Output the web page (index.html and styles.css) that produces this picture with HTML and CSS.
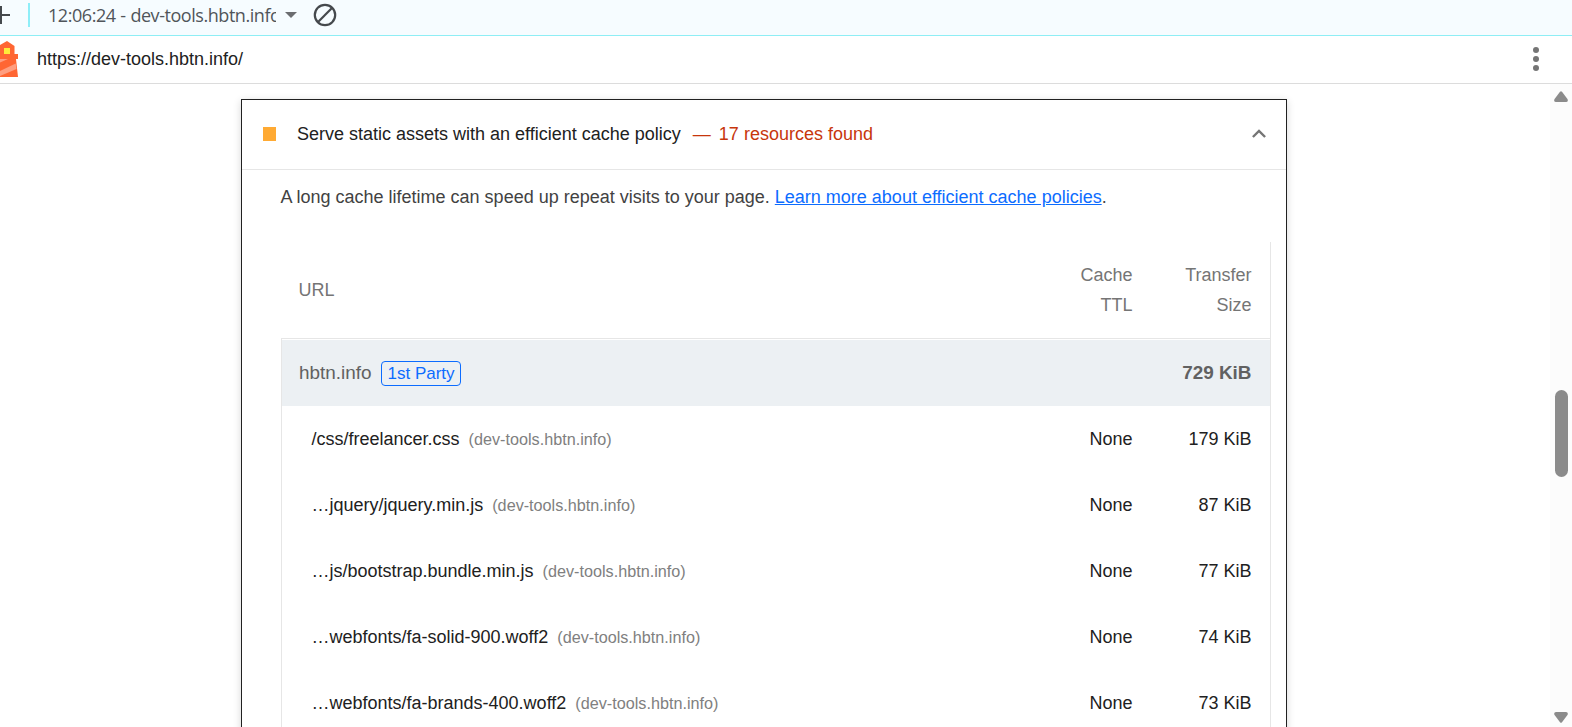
FILE: index.html
```
<!DOCTYPE html>
<html lang="en">
<head>
<meta charset="utf-8">
<title>Lighthouse</title>
<link rel="stylesheet" href="styles.css">
</head>
<body>
<header class="toolbar">
  <svg class="plus" width="10" height="35" viewBox="0 0 10 35"><path d="M1 6v18M0 15h10" fill="none" stroke="#45494d" stroke-width="2"/></svg>
  <span class="separator"></span>
  <span class="report-name">12:06:24 - dev-tools.hbtn.info</span>
  <svg class="arrow" width="12" height="6" viewBox="0 0 12 6"><path d="M0 0h12L6 6z" fill="#6b6d70"/></svg>
  <svg class="clear" width="24" height="24" viewBox="0 0 24 24"><g fill="none" stroke="#45494d" stroke-width="2.2"><circle cx="12" cy="12" r="10.2"/><path d="M4.8 19.2L19.2 4.8"/></g></svg>
</header>
<div class="urlbar">
  <svg class="lighthouse" width="19" height="36" viewBox="0 0 19 36">
    <path d="M0 4L7 0l7.500 5V13H18v5h-2l2 18H0z" fill="#ff6633"/>
    <path d="M0 18h8L0 21.500zM0 30l15.700-7.500.8 5.500L0 35z" fill="#ff9e80"/>
    <path d="M4 7h6v6H4z" fill="#ffeb3b"/>
  </svg>
  <span class="url">https://dev-tools.hbtn.info/</span>
  <svg class="more" width="6" height="24" viewBox="0 0 6 24" fill="#757575"><circle cx="3" cy="3" r="3"/><circle cx="3" cy="12" r="3"/><circle cx="3" cy="21" r="3"/></svg>
</div>
<div class="content">
  <main class="report">
    <section class="audit">
      <div class="audit-header">
        <span class="marker"></span>
        <span class="audit-title">Serve static assets with an efficient cache policy</span>
        <span class="dash">—</span>
        <span class="found">17 resources found</span>
        <svg class="chevron" width="14" height="9" viewBox="0 0 14 9"><path d="M.9 8L7 1.9 13.1 8" fill="none" stroke="#757575" stroke-width="2.4"/></svg>
      </div>
      <p class="description">A long cache lifetime can speed up repeat visits to your page. <a href="#">Learn more about efficient cache policies</a>.</p>
      <div class="table">
        <div class="row head"><span>URL</span><span class="num">Cache<br>TTL</span><span class="num">Transfer<br>Size</span></div>
        <div class="body">
          <div class="row group"><span class="entity">hbtn.info<span class="badge">1st Party</span></span><span></span><span class="num">729 KiB</span></div>
          <div class="row item"><span>/css/freelancer.css<small>(dev-tools.hbtn.info)</small></span><span class="num">None</span><span class="num">179 KiB</span></div>
          <div class="row item"><span>…jquery/jquery.min.js<small>(dev-tools.hbtn.info)</small></span><span class="num">None</span><span class="num">87 KiB</span></div>
          <div class="row item"><span>…js/bootstrap.bundle.min.js<small>(dev-tools.hbtn.info)</small></span><span class="num">None</span><span class="num">77 KiB</span></div>
          <div class="row item"><span>…webfonts/fa-solid-900.woff2<small>(dev-tools.hbtn.info)</small></span><span class="num">None</span><span class="num">74 KiB</span></div>
          <div class="row item"><span>…webfonts/fa-brands-400.woff2<small>(dev-tools.hbtn.info)</small></span><span class="num">None</span><span class="num">73 KiB</span></div>
        </div>
      </div>
    </section>
  </main>
  <div class="scrollbar">
    <svg width="14" height="11" viewBox="0 0 14 11"><path d="M6 .8Q7-.3 8 .8l5.6 7.5Q14.4 11 12 11H2Q-.4 11 .4 8.300z" fill="#8b8b8b"/></svg>
    <span class="thumb"></span>
    <svg width="14" height="11" viewBox="0 0 14 11"><path d="M6 10.200Q7 11.300 8 10.200l5.600-7.500Q14.400 0 12 0H2Q-.4 0 .4 2.700z" fill="#8b8b8b"/></svg>
  </div>
</div>
</body>
</html>
```
FILE: styles.css
```
* { box-sizing: border-box; }

body {
  margin: 0;
  height: 727px;
  overflow: hidden;
  display: flex;
  flex-direction: column;
  background: #fff;
  font: 18px "Liberation Sans", Arial, sans-serif;
  color: #212121;
}

svg { display: block; flex: none; }

.toolbar {
  flex: none;
  height: 36px;
  display: flex;
  align-items: flex-start;
  background: #f6fcff;
  border-bottom: 1px solid #8eeef5;
}
.separator { width: 2px; height: 24px; margin: 3px 0 0 18px; background: #8eeef8; }
.report-name {
  width: 228px;
  margin-left: 18px;
  overflow: hidden;
  white-space: nowrap;
  font: 18px/30px "Open Sans", "Noto Sans", sans-serif;
  letter-spacing: -0.45px;
  word-spacing: 0.5px;
  color: #50555a;
}
.arrow { margin: 12px 0 0 9px; }
.clear { margin: 3px 0 0 16px; }

.urlbar {
  flex: none;
  height: 48px;
  display: flex;
  align-items: center;
  border-bottom: 1px solid #dcdcdc;
}
.lighthouse { margin-bottom: 1px; }
.url { margin-left: 18px; }
.more { margin: 0 33px 1px auto; }

.content { flex: 1; min-height: 0; display: flex; }
.report { flex: 1; padding: 15px 263px 0 241px; overflow: hidden; }

.audit {
  height: 800px;
  border: 1px solid #212121;
  box-shadow: 0 2px 8px rgba(0, 0, 0, 0.16);
}
.audit-header {
  height: 70px;
  display: flex;
  align-items: center;
  padding: 0 20px 1px 21px;
  border-bottom: 1px solid #e6e6e6;
}
.marker { width: 13px; height: 14px; margin-right: 21px; background: #ffaa33; }
.dash { margin-left: 12px; color: #c7360c; }
.found { margin-left: 8px; color: #c7360c; }
.chevron { margin: 0 0 2px auto; }

.description { margin: 12px 0 0 38.5px; line-height: 30px; color: #424242; }
.description a { color: #0c6cff; }

.table { margin: 30px 15px 0 39px; border-right: 1px solid #e6e6e6; color: #212121; }
.row {
  display: grid;
  grid-template-columns: 1fr 118px 119px;
  align-items: center;
  padding-right: 18.5px;
  height: 66px;
  line-height: 30px;
  white-space: nowrap;
}
.num { text-align: right; }
.head { height: 97px; padding-left: 17.500px; border-bottom: 1px solid #e6e6e6; color: #757575; }
.body { padding-top: 1px; border-left: 1px solid #e6e6e6; }
.group { background: #ecf0f3; padding-left: 17px; font-size: 18.900px; color: #616161; }
.group .num { font-weight: bold; }
.entity { display: flex; align-items: center; }
.badge {
  margin: 1px 0 0 10px;
  padding: 0 5px;
  border: 1px solid #0c6cff;
  border-radius: 4px;
  font-size: 17px;
  line-height: 23px;
  color: #0c6cff;
}
.item { padding-left: 29.500px; }
.item small { margin-left: 9px; font-size: 16.200px; color: #808080; }

.scrollbar {
  flex: none;
  width: 22px;
  display: flex;
  flex-direction: column;
  align-items: center;
  justify-content: space-between;
  padding: 7px 0 4px;
  background: #fcfcfc;
}
.thumb { width: 13px; height: 87px; margin-top: 52px; border-radius: 7px; background: #8b8b8b; }
```
